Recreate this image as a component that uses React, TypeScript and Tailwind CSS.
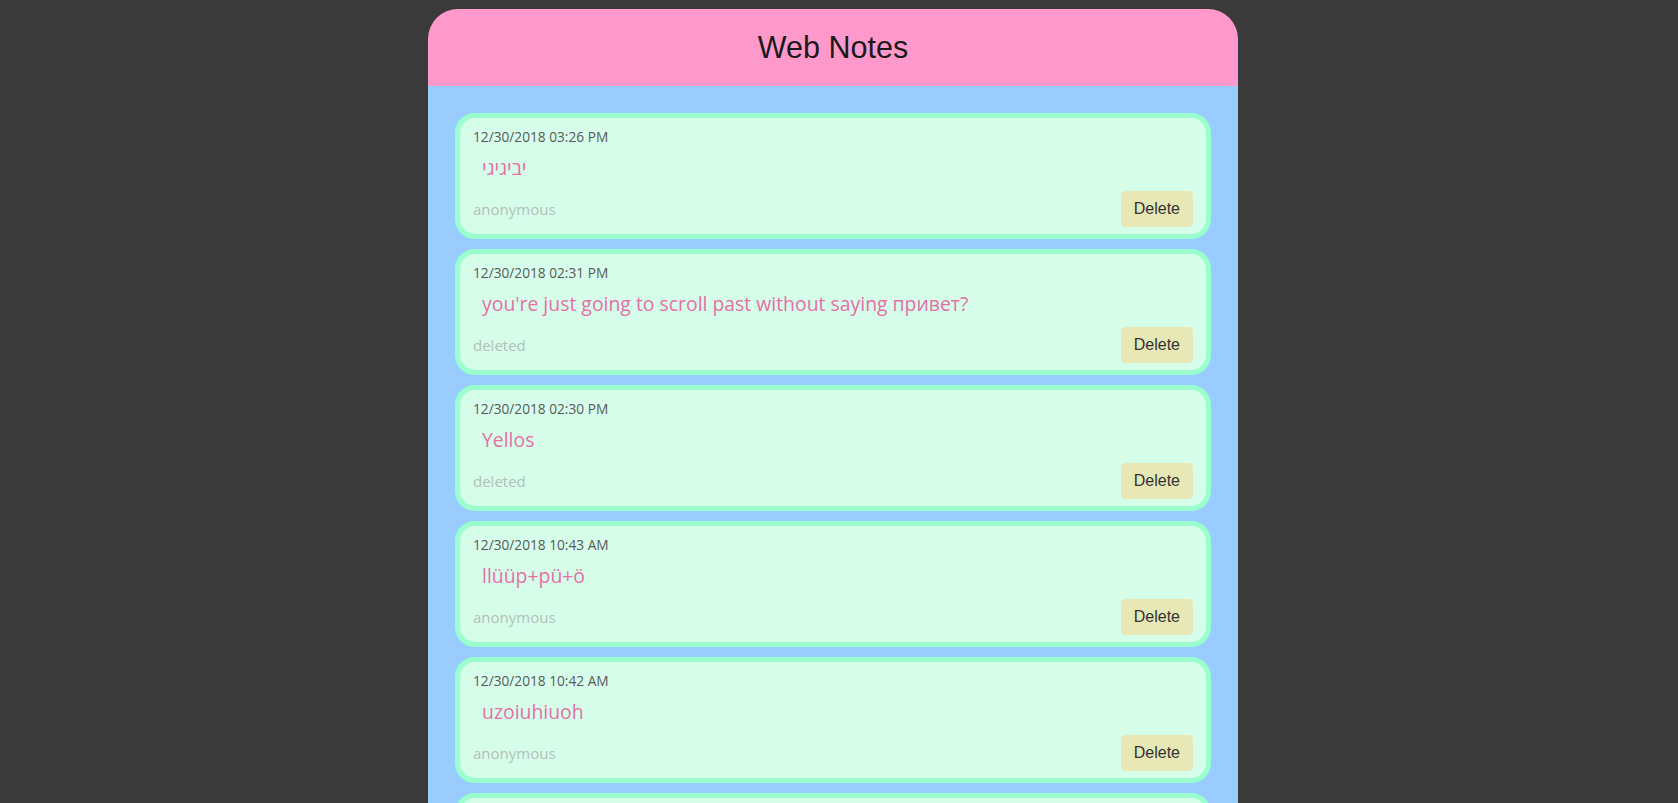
const notes = [
  { date: '12/30/2018 03:26 PM', text: 'יביגיגי', author: 'anonymous' },
  {
    date: '12/30/2018 02:31 PM',
    text: "you're just going to scroll past without saying привет?",
    author: 'deleted',
  },
  { date: '12/30/2018 02:30 PM', text: 'Yellos', author: 'deleted' },
  { date: '12/30/2018 10:43 AM', text: 'llüüp+pü+ö', author: 'anonymous' },
  { date: '12/30/2018 10:42 AM', text: 'uzoiuhiuoh', author: 'anonymous' },
  { date: '12/30/2018 10:41 AM', text: 'hello', author: 'anonymous' },
  { date: '12/30/2018 10:40 AM', text: 'test', author: 'anonymous' },
]

function Note({ date, text, author }: { date: string; text: string; author: string }) {
  return (
    <div className="rounded-[20px] border-[5px] border-[#99ffcc] bg-[#d5fde9] px-[13px] pt-[10px] pb-[7px]">
      <div className="text-[13.7px] leading-[18px] text-[#5a5a5a]">{date}</div>
      <p className="mt-[8px] pl-[9px] text-[19.4px] leading-[28px] text-[#e66fa6]">{text}</p>
      <div className="mt-[9px] flex items-center justify-between">
        <span className="text-[15px] text-[#b3c1b8]">{author}</span>
        <button
          type="button"
          className="h-[36px] rounded-[5px] bg-[#e7e8b5] px-[13px] font-['Liberation_Sans',Arial,sans-serif] text-[16px] text-[#333]"
        >
          Delete
        </button>
      </div>
    </div>
  )
}

export default function App() {
  return (
    <div className="h-screen overflow-hidden bg-[#3a3a3a] pt-[9px] pr-[12px] font-['Open_Sans','Noto_Sans',sans-serif]">
      <div className="mx-auto w-[810px] overflow-hidden rounded-t-[30px]">
        {/* Header */}
        <header className="flex h-[77px] items-center justify-center bg-[#ff99cc]">
          <h1 className="font-['Liberation_Sans',Arial,sans-serif] text-[30.5px] text-[#1a1a1a]">
            Web Notes
          </h1>
        </header>

        {/* Notes list */}
        <main className="flex flex-col gap-[10px] bg-[#99ccff] px-[27px] pt-[27px] pb-[27px]">
          {notes.map((n) => (
            <Note key={n.date} {...n} />
          ))}
        </main>
      </div>
    </div>
  )
}
